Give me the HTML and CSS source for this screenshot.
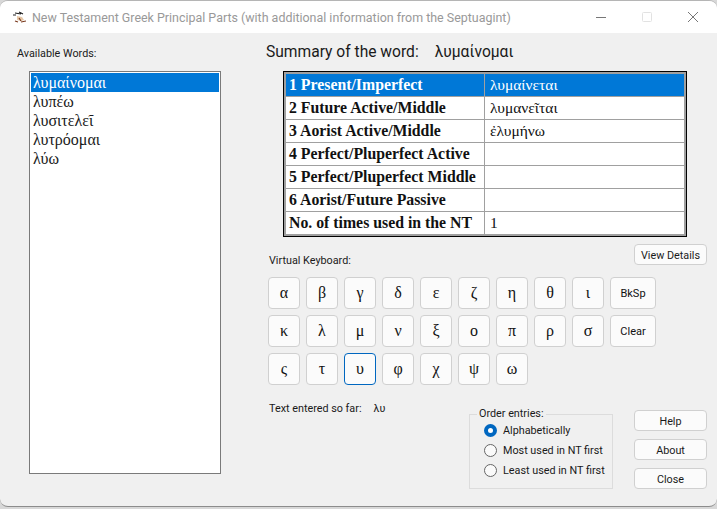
FILE: index.html
```html
<!DOCTYPE html>
<html lang="en">
<head>
    <meta charset="UTF-8">
    <title>New Testament Greek Principal Parts</title>
    <link rel="stylesheet" href="styles.css">
</head>
<body>
    <div class="window">
        <div class="titlebar">
            <svg class="app-icon" width="16" height="16" viewBox="0 0 16 16">
                <path d="M1 6h3M3 4l6 1M7 3l4 2" stroke="#222" stroke-width="1.2" fill="none"/>
                <path d="M5 7l5 1 2 3-3 1-4-1z" fill="#e8c9a8"/>
                <path d="M3 12l3 1M9 13l5-1M7 9l2 3" stroke="#7a3b20" stroke-width="1.2" fill="none"/>
            </svg>
            <span class="title">New Testament Greek Principal Parts (with additional information from the Septuagint)</span>
            <div class="caption-buttons">
                <svg width="12" height="12" viewBox="0 0 12 12"><path d="M1 6.5h10" stroke="#777"/></svg>
                <svg width="12" height="12" viewBox="0 0 12 12"><rect x="1.5" y="1.5" width="9" height="9" rx="1" fill="none" stroke="#e2e2e2"/></svg>
                <svg width="12" height="12" viewBox="0 0 12 12"><path d="M1 1l10 10M11 1L1 11" stroke="#777"/></svg>
            </div>
        </div>

        <div class="content">
            <div class="left">
                <div class="label">Available Words:</div>
                <ul class="listbox">
                    <li class="selected">λυμαίνομαι</li>
                    <li>λυπέω</li>
                    <li>λυσιτελεῖ</li>
                    <li>λυτρόομαι</li>
                    <li>λύω</li>
                </ul>
            </div>

            <div class="right">
                <div class="summary"><span>Summary of the word:</span><span>λυμαίνομαι</span></div>

                <div class="parts-frame">
                    <table class="parts">
                        <tr class="selected"><th>1 Present/Imperfect</th><td>λυμαίνεται</td></tr>
                        <tr><th>2 Future Active/Middle</th><td>λυμανεῖται</td></tr>
                        <tr><th>3 Aorist Active/Middle</th><td>ἐλυμήνω</td></tr>
                        <tr><th>4 Perfect/Pluperfect Active</th><td></td></tr>
                        <tr><th>5 Perfect/Pluperfect Middle</th><td></td></tr>
                        <tr><th>6 Aorist/Future Passive</th><td></td></tr>
                        <tr><th>No. of times used in the NT</th><td>1</td></tr>
                    </table>
                </div>

                <div class="details-row">
                    <div class="label">Virtual Keyboard:</div>
                    <button class="btn">View Details</button>
                </div>

                <div class="keyboard">
                    <button class="key">α</button>
                    <button class="key">β</button>
                    <button class="key">γ</button>
                    <button class="key">δ</button>
                    <button class="key">ε</button>
                    <button class="key">ζ</button>
                    <button class="key">η</button>
                    <button class="key">θ</button>
                    <button class="key">ι</button>
                    <button class="key wide">BkSp</button>
                    <button class="key">κ</button>
                    <button class="key">λ</button>
                    <button class="key">μ</button>
                    <button class="key">ν</button>
                    <button class="key">ξ</button>
                    <button class="key">ο</button>
                    <button class="key">π</button>
                    <button class="key">ρ</button>
                    <button class="key">σ</button>
                    <button class="key wide">Clear</button>
                    <button class="key">ς</button>
                    <button class="key">τ</button>
                    <button class="key focused">υ</button>
                    <button class="key">φ</button>
                    <button class="key">χ</button>
                    <button class="key">ψ</button>
                    <button class="key">ω</button>
                </div>

                <div class="bottom">
                    <div class="entered"><span>Text entered so far:</span><span>λυ</span></div>
                    <fieldset class="order">
                        <legend>Order entries:</legend>
                        <div class="radio"><i class="dot checked"></i>Alphabetically</div>
                        <div class="radio"><i class="dot"></i>Most used in NT first</div>
                        <div class="radio"><i class="dot"></i>Least used in NT first</div>
                    </fieldset>
                    <div class="side-buttons">
                        <button class="btn">Help</button>
                        <button class="btn">About</button>
                        <button class="btn">Close</button>
                    </div>
                </div>
            </div>
        </div>
    </div>
</body>
</html>
```

FILE: styles.css
```css
html, body {
    height: 100%;
}

body {
    margin: 0;
    background: #d8d8d8;
    font-family: 'Roboto', 'Noto Sans', sans-serif;
    font-size: 10.8px;
    color: #1a1a1a;
    overflow: hidden;
}

.window {
    height: 507px;
    background: #f0f0f0;
    border-radius: 8px;
    border-top: 1px solid #b5b5b5;
    border-bottom: 1px solid #8c8c8c;
    box-sizing: border-box;
    overflow: hidden;
}

.titlebar {
    display: flex;
    align-items: center;
    height: 32px;
    background: #fff;
    padding-left: 12px;
}

.app-icon {
    margin-right: 4px;
}

.title {
    font-size: 12.45px;
    color: #999;
    white-space: nowrap;
}

.caption-buttons {
    display: flex;
    gap: 34px;
    margin-left: auto;
    margin-right: 18px;
}

.content {
    display: flex;
}

.left {
    width: 266px;
    padding: 13px 0 0 17px;
    box-sizing: border-box;
}

.label {
    line-height: 16px;
}

.listbox {
    width: 192px;
    height: 403px;
    margin: 9px 0 0 12px;
    padding: 1px;
    list-style: none;
    background: #fff;
    border: 1px solid #7a7a7a;
    box-sizing: border-box;
    font-family: 'Liberation Serif', serif;
    font-size: 16px;
}

.listbox li {
    height: 19px;
    line-height: 19px;
    padding-left: 2px;
}

.selected {
    background: #0078d7;
    color: #fff;
}

.right {
    flex: 1;
}

.summary {
    display: flex;
    gap: 16px;
    font-size: 15.6px;
    line-height: 22px;
    margin-top: 8px;
}

.parts-frame {
    width: 404px;
    height: 166px;
    margin: 8px 0 0 17px;
    border: 1px solid #000;
    box-sizing: border-box;
}

.parts {
    width: 100%;
    height: 100%;
    border: 2px solid #a0a0a0;
    border-spacing: 0;
    background: #fff;
    font-family: 'Liberation Serif', serif;
    table-layout: fixed;
}

.parts th, .parts td {
    height: 22px;
    padding: 0 0 0 5px;
    border-top: 1px solid #a0a0a0;
    text-align: left;
    font-size: 15.5px;
    color: #111;
}

.parts tr:first-child th, .parts tr:first-child td {
    border-top: 0;
}

.parts th {
    width: 195px;
    padding-left: 3px;
    font-size: 15.8px;
}

.parts td {
    border-left: 1px solid #a0a0a0;
}

.parts .selected th, .parts .selected td {
    color: #fff;
}

.details-row {
    display: flex;
    justify-content: space-between;
    margin: 7px 10px 0 3px;
}

.details-row .label {
    margin-top: 9px;
}

.btn {
    width: 73px;
    height: 21px;
    padding: 1px 0 0;
    background: #fbfbfb;
    border: 1px solid #d0d0d0;
    border-radius: 4px;
    font: inherit;
    color: inherit;
}

.keyboard {
    display: flex;
    flex-wrap: wrap;
    gap: 6px;
    width: 400px;
    margin: 8px 0 0 2px;
}

.key {
    width: 32px;
    height: 32px;
    padding: 0;
    background: #fbfbfb;
    border: 1px solid #d0d0d0;
    border-radius: 4px;
    font-family: 'Liberation Serif', serif;
    font-size: 16px;
    color: #111;
}

.key.wide {
    width: 46px;
    font-family: 'Roboto', sans-serif;
    font-size: 11px;
}

.key.focused {
    border-color: #0067c0;
}

.bottom {
    display: flex;
    margin-top: 15px;
}

.entered {
    display: flex;
    gap: 12px;
    width: 200px;
    margin-left: 3px;
    padding-top: 1px;
    line-height: 16px;
    box-sizing: border-box;
}

.order {
    width: 144px;
    height: 81px;
    box-sizing: border-box;
    margin: 8px 21px 0 0;
    padding: 0 0 0 14px;
    border: 1px solid #dcdcdc;
}

.order legend {
    padding: 0 2px;
    margin-left: -7px;
    line-height: 12px;
}

.radio {
    display: flex;
    align-items: center;
    gap: 6px;
    height: 20px;
    white-space: nowrap;
}

.dot {
    width: 11px;
    height: 11px;
    border: 1px solid #666;
    border-radius: 50%;
    background: #fafafa;
}

.dot.checked {
    width: 5px;
    height: 5px;
    border: 4px solid #0067c0;
    background: #fff;
}

.side-buttons {
    display: flex;
    flex-direction: column;
    gap: 8px;
    margin-top: 10px;
}
```
